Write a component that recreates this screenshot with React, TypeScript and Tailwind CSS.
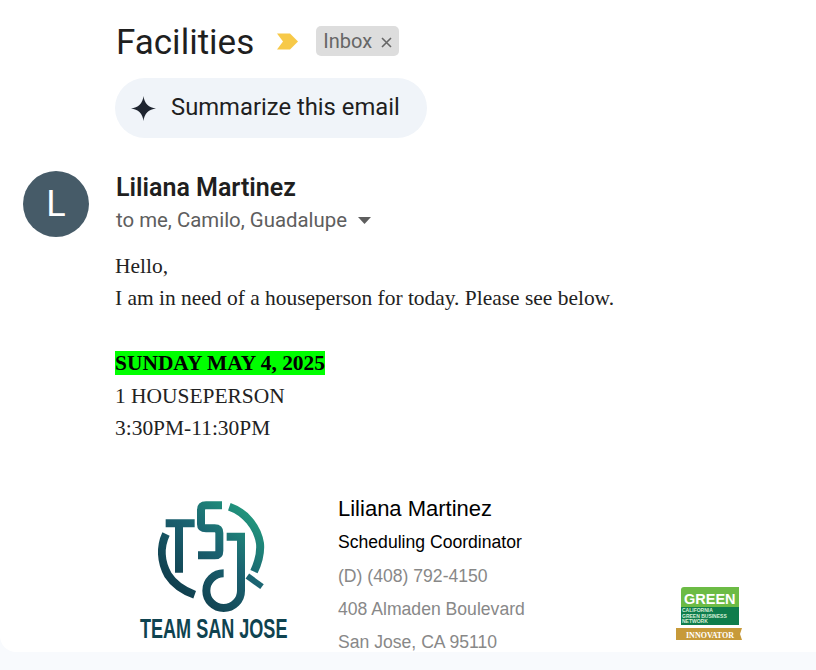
function TeamLogo() {
  return (
    <svg width="170" height="160" viewBox="0 0 510 480" fill="none" className="shrink-0">
      <defs>
        <linearGradient id="tsj" x1="130" y1="360" x2="400" y2="60" gradientUnits="userSpaceOnUse">
          <stop offset="0" stopColor="#0d3443" />
          <stop offset="0.55" stopColor="#1b6271" />
          <stop offset="1" stopColor="#22a27f" />
        </linearGradient>
      </defs>
      <g stroke="url(#tsj)" strokeWidth="24">
        {/* ring */}
        <path d="M108 132C90 170 92 215 114 255C132 283 160 302 194 314" />
        <path d="M298 50C345 66 382 110 390 160C393 190 386 215 372 245" />
        <path d="M352 258L396 290" strokeWidth="18" />
        {/* T */}
        <path d="M107 100H194" />
        <path d="M147 100V248" />
        {/* S */}
        <path d="M276 46H228Q213 46 213 60V103Q213 115 228 115H254Q268 115 268 129V182Q268 196 254 196H204" />
        {/* J */}
        <path d="M290 140H333V302A52 52 0 1 1 281 250" />
      </g>
      <text
        transform="translate(30 445) scale(0.645 1)"
        fontFamily="'Liberation Sans', sans-serif"
        fontWeight="700"
        fontSize="84"
        fill="#0f4350"
      >
        TEAM SAN JOSE
      </text>
    </svg>
  );
}

function GreenBadge() {
  return (
    <svg width="68" height="56" viewBox="0 0 68 56" className="shrink-0">
      <path d="M9 3H64V23H6V6Q6 3 9 3Z" fill="#6cbb45" />
      <rect x="6" y="23" width="58" height="18" fill="#0f7d4c" />
      <path d="M1 44H67L65 50L67 56H1Z" fill="#c79a3a" />
      <text x="9" y="19.5" fontFamily="'Liberation Sans', sans-serif" fontWeight="700" fontSize="14.5" fill="#fff">
        GREEN
      </text>
      <g fontFamily="'Liberation Sans', sans-serif" fontWeight="700" fontSize="5" fill="#d8efd8">
        <text x="7" y="28">CALIFORNIA</text>
        <text x="7" y="33.5">GREEN BUSINESS</text>
        <text x="7" y="39">NETWORK</text>
      </g>
      <text x="11" y="53.5" fontFamily="'Liberation Serif', serif" fontWeight="700" fontSize="8" fill="#fff">
        INNOVATOR
      </text>
    </svg>
  );
}

export default function App() {
  return (
    <div className="h-[670px] w-[816px] overflow-hidden bg-[#f8fafd]">
      <main className="h-[652px] overflow-hidden rounded-bl-2xl bg-white font-['Roboto',sans-serif]">
        {/* subject */}
        <div className="flex h-[78px] items-center pl-[116px] pt-1">
          <h1 className="mt-[2px] text-[35px] leading-none text-[#1f1f1f]">Facilities</h1>
          <svg width="23" height="17" viewBox="0 0 23 17" className="ml-[22px] shrink-0">
            <path d="M1 0.5H14L22 8.5L14 16.5H1L7 8.5Z" fill="#f7c948" />
          </svg>
          <div className="ml-[17px] flex h-[30px] items-center gap-[9px] rounded-[5px] bg-[#dddddd] pl-[7px] pr-[7px] text-[20px] text-[#666666]">
            Inbox
            <svg width="11" height="11" viewBox="0 0 11 11" className="mt-[3px]">
              <path d="M1 1L10 10M10 1L1 10" stroke="#666666" strokeWidth="1.6" />
            </svg>
          </div>
        </div>

        <div className="pl-[115px]">
          <button className="flex h-[60px] w-[312px] items-center gap-[15px] rounded-[30px] bg-[#f0f4f9] pl-4 text-[23.8px] text-[#1f1f1f]">
            <svg width="25" height="25" viewBox="0 0 24 24">
              <path d="M12 0C12.6 6.8 17.2 11.4 24 12C17.2 12.6 12.6 17.2 12 24C11.4 17.2 6.8 12.6 0 12C6.8 11.4 11.4 6.8 12 0Z" fill="#1f2530" />
            </svg>
            Summarize this email
          </button>
        </div>

        {/* message */}
        <div className="mt-[33px] flex pl-[23px]">
          <div className="flex h-[66px] w-[66px] shrink-0 items-center justify-center rounded-full bg-[#465b68] text-[36px] text-white">
            L
          </div>
          <div className="ml-[27px] min-w-0 flex-1">
            <div className="pt-px pb-px text-[25px] font-semibold leading-[32px] text-[#1f1f1f]">Liliana Martinez</div>
            <div className="flex items-center text-[20.4px] leading-[30px] text-[#5e5e5e]">
              to me, Camilo, Guadalupe
              <svg width="13" height="7" viewBox="0 0 13 7" className="ml-[11px]">
                <path d="M0 0H13L6.5 7Z" fill="#5e5e5e" />
              </svg>
            </div>
          </div>
        </div>

        <div className="mt-[13px] pl-[115px] font-['Liberation_Serif',serif] text-[21.45px] leading-[32.4px] text-[#222222]">
          <div>Hello,</div>
          <div>I am in need of a houseperson for today. Please see below.</div>
          <div className="h-[32.4px]" />
          <div>
            <span className="bg-[#00ff00] font-bold text-black">SUNDAY MAY 4, 2025</span>
          </div>
          <div>1 HOUSEPERSON</div>
          <div>3:30PM-11:30PM</div>
        </div>

        {/* signature */}
        <div className="mt-[46px] flex pl-[130px] font-['Liberation_Sans',sans-serif]">
          <TeamLogo />
          <div className="ml-[38px] w-[300px] shrink-0 pt-[2px]">
            <div className="text-[22px] leading-[33px] text-black">Liliana Martinez</div>
            <div className="text-[17.6px] leading-[35px] text-black">Scheduling Coordinator</div>
            <div className="text-[17.6px] leading-[33px] text-[#888888]">(D) (408) 792-4150</div>
            <div className="text-[17.6px] leading-[33px] text-[#888888]">408 Almaden Boulevard</div>
            <div className="text-[17.6px] leading-[33px] text-[#888888]">San Jose, CA 95110</div>
          </div>
          <div className="ml-[37px] pt-[94px]">
            <GreenBadge />
          </div>
        </div>
      </main>
    </div>
  );
}
